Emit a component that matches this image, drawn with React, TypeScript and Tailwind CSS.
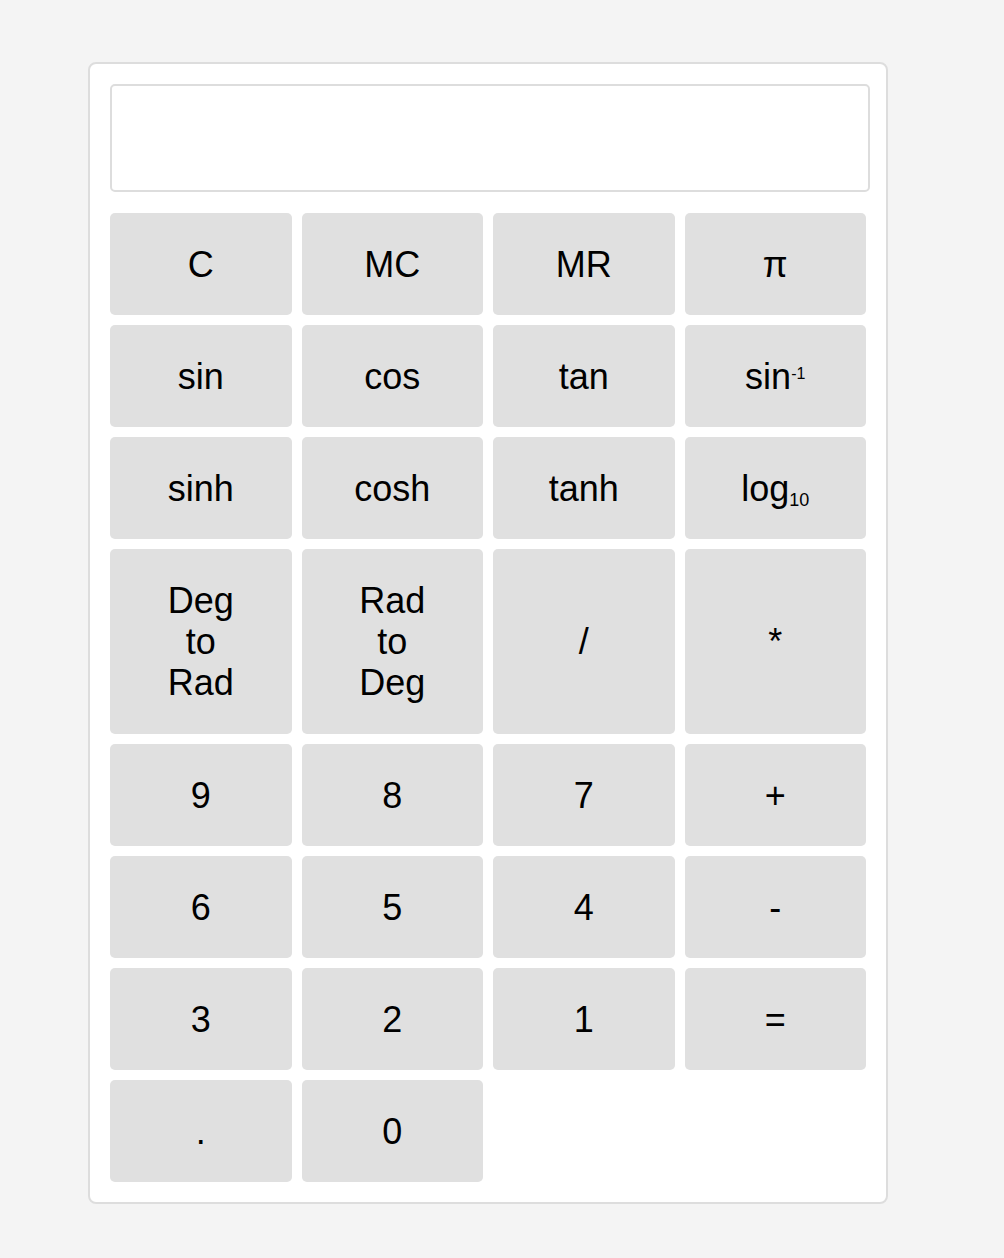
import type { ReactNode } from "react";

type Key = { label: ReactNode; tall?: boolean };

const keys: Key[] = [
  { label: "C" },
  { label: "MC" },
  { label: "MR" },
  { label: "π" },
  { label: "sin" },
  { label: "cos" },
  { label: "tan" },
  {
    label: (
      <>
        sin<span className="relative -top-[10px] text-[16px] leading-none">-1</span>
      </>
    ),
  },
  { label: "sinh" },
  { label: "cosh" },
  { label: "tanh" },
  {
    label: (
      <>
        log<span className="relative top-[5px] text-[18px] leading-none">10</span>
      </>
    ),
  },
  {
    label: (
      <>
        Deg
        <br />
        to
        <br />
        Rad
      </>
    ),
    tall: true,
  },
  {
    label: (
      <>
        Rad
        <br />
        to
        <br />
        Deg
      </>
    ),
    tall: true,
  },
  { label: "/", tall: true },
  { label: "*", tall: true },
  { label: "9" },
  { label: "8" },
  { label: "7" },
  { label: "+" },
  { label: "6" },
  { label: "5" },
  { label: "4" },
  { label: "-" },
  { label: "3" },
  { label: "2" },
  { label: "1" },
  { label: "=" },
  { label: "." },
  { label: "0" },
];

function CalcButton({ label, tall }: Key) {
  return (
    <button
      className={`flex items-center justify-center rounded-[5px] bg-[#e0e0e0] text-[36px] leading-[41px] text-black text-center ${
        tall ? "h-[185px]" : "h-[102px]"
      }`}
    >
      <span>{label}</span>
    </button>
  );
}

export default function App() {
  return (
    <div
      className="min-h-[1258px] bg-[#f4f4f4] pl-[88px] pt-[62px]"
      style={{ fontFamily: '"Liberation Sans", Arial, sans-serif' }}
    >
      <div className="w-[800px] rounded-[8px] border-2 border-[#dddddd] bg-white p-[20px]">
        {/* display */}
        <div className="mb-[21px] h-[108px] w-[760px] rounded-[5px] border-2 border-[#dddddd] bg-white" />
        <div className="grid grid-cols-4 gap-[10px]">
          {keys.map((k, i) => (
            <CalcButton key={i} {...k} />
          ))}
        </div>
      </div>
    </div>
  );
}
